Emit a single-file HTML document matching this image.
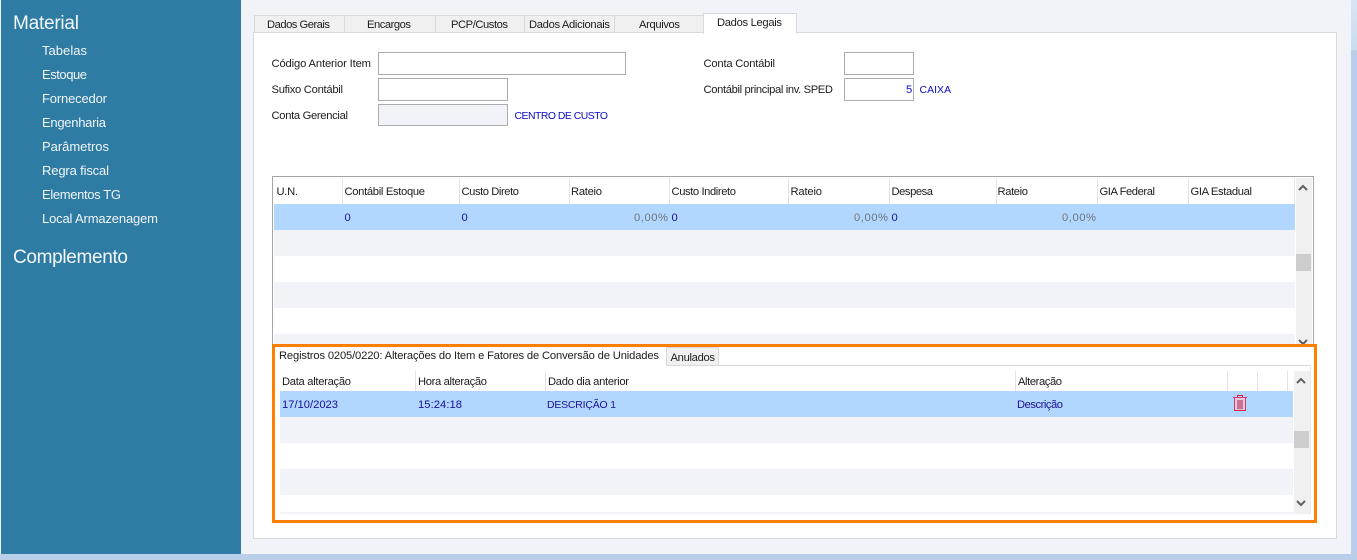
<!DOCTYPE html>
<html lang="pt"><head><meta charset="utf-8"><title>Material</title>
<style>
html,body{margin:0;padding:0;width:1357px;height:560px;overflow:hidden;background:#f2f3f8}
svg{display:block}
text{font-family:"Liberation Sans",sans-serif;font-size:11.2px;fill:#1c1c1c}
.s{font-size:13px;fill:#f1f6f9}
.h{font-size:19px;fill:#f4f8fb}
.b{fill:#0a0ac8}
.d{fill:#1c0f96}
.g{fill:#6f7580}
.u{font-size:10.4px}
</style></head><body>
<svg width="1357" height="560" viewBox="0 0 1357 560" xmlns="http://www.w3.org/2000/svg" lengthAdjust="spacing" shape-rendering="crispEdges">
<defs><linearGradient id="t" x1="0" y1="0" x2="0" y2="1"><stop offset="0" stop-color="#d6e5f5"/><stop offset="1" stop-color="#c9dcf0"/></linearGradient></defs>
<rect width="1357" height="560" fill="#f2f3f8"/>
<rect x="1" y="0" width="240" height="554" fill="#2e7ba3"/>
<rect x="0" y="554" width="1357" height="6" fill="#b9cfe9"/>
<rect x="1351" y="0" width="6" height="560" fill="#b9cfe9"/>
<rect x="1351" y="0" width="6" height="50" fill="url(#t)"/>

<!-- sidebar -->
<text class="h" x="13" y="29" textLength="66">Material</text>
<text class="s" x="42" y="55" textLength="45">Tabelas</text>
<text class="s" x="42" y="79" textLength="45">Estoque</text>
<text class="s" x="42" y="103" textLength="65">Fornecedor</text>
<text class="s" x="42" y="127" textLength="64">Engenharia</text>
<text class="s" x="42" y="151" textLength="67">Parâmetros</text>
<text class="s" x="42" y="175" textLength="67">Regra fiscal</text>
<text class="s" x="42" y="199" textLength="79">Elementos TG</text>
<text class="s" x="42" y="223" textLength="116">Local Armazenagem</text>
<text class="h" x="13" y="263" textLength="115">Complemento</text>

<!-- tabs -->
<g fill="#f0f0f0" stroke="#d9d9d9">
<rect x="254.500" y="15.500" width="90" height="17"/>
<rect x="344.500" y="15.500" width="91" height="17"/>
<rect x="435.500" y="15.500" width="89" height="17"/>
<rect x="524.500" y="15.500" width="90" height="17"/>
<rect x="614.500" y="15.500" width="89" height="17"/>
</g>
<!-- main panel -->
<rect x="253.500" y="32.500" width="1083" height="506" fill="#fff" stroke="#d9d9d9"/>
<rect x="703.500" y="13.500" width="93" height="20" fill="#fff" stroke="#d9d9d9"/>
<rect x="704" y="32" width="92" height="2" fill="#fff"/>
<text x="267" y="28" textLength="63">Dados Gerais</text>
<text x="367" y="28" textLength="44">Encargos</text>
<text x="451" y="28" textLength="57">PCP/Custos</text>
<text x="529" y="28" textLength="81">Dados Adicionais</text>
<text x="639" y="28" textLength="41">Arquivos</text>
<text x="717" y="26" textLength="65">Dados Legais</text>

<!-- form -->
<g fill="#fff" stroke="#ababab">
<rect x="378.500" y="52.500" width="247" height="22"/>
<rect x="378.500" y="78.500" width="129" height="22"/>
<rect x="378.500" y="104.500" width="129" height="21" fill="#f2f3f8"/>
<rect x="844.500" y="52.500" width="69" height="22"/>
<rect x="844.500" y="78.500" width="69" height="22"/>
</g>
<text x="271.500" y="67" textLength="99.500">Código Anterior Item</text>
<text x="271.500" y="93" textLength="71.500">Sufixo Contábil</text>
<text x="271.500" y="119" textLength="76.500">Conta Gerencial</text>
<text class="b u" x="514.500" y="119" textLength="93.500">CENTRO DE CUSTO</text>
<text x="703.500" y="67" textLength="71.500">Conta Contábil</text>
<text x="703.500" y="93" textLength="129.500">Contábil principal inv. SPED</text>
<text class="b" x="906" y="93">5</text>
<text class="b u" x="919.500" y="93" textLength="31.500">CAIXA</text>

<!-- upper grid -->
<rect x="272.500" y="176.500" width="1041" height="172" fill="#fff" stroke="#a6a6a6"/>
<rect x="274" y="204" width="1021" height="26" fill="#b1d7fe"/>
<rect x="274" y="230" width="1021" height="26" fill="#f2f3f8"/>
<rect x="274" y="282" width="1021" height="26" fill="#f2f3f8"/>
<rect x="274" y="334" width="1021" height="12" fill="#f2f3f8"/>
<rect x="1296" y="178" width="16" height="168" fill="#f0f0f0"/>
<rect x="1296" y="254" width="15" height="17" fill="#cdcdcd"/>
<g fill="#e3e3e3">
<rect x="342" y="178" width="1" height="26"/><rect x="459" y="178" width="1" height="26"/>
<rect x="569" y="178" width="1" height="26"/><rect x="669" y="178" width="1" height="26"/>
<rect x="788" y="178" width="1" height="26"/><rect x="889" y="178" width="1" height="26"/>
<rect x="996" y="178" width="1" height="26"/><rect x="1097" y="178" width="1" height="26"/>
<rect x="1188" y="178" width="1" height="26"/><rect x="1294" y="178" width="1" height="26"/>
</g>
<text x="276.500" y="195" textLength="21.500">U.N.</text>
<text x="344.500" y="195" textLength="80.500">Contábil Estoque</text>
<text x="461.500" y="195" textLength="57.500">Custo Direto</text>
<text x="571" y="195" textLength="31">Rateio</text>
<text x="671.500" y="195" textLength="64.500">Custo Indireto</text>
<text x="790.500" y="195" textLength="31.500">Rateio</text>
<text x="891.500" y="195" textLength="41.500">Despesa</text>
<text x="997.500" y="195" textLength="30.500">Rateio</text>
<text x="1099.500" y="195" textLength="55.500">GIA Federal</text>
<text x="1190.500" y="195" textLength="61.500">GIA Estadual</text>
<text class="d" x="344.500" y="221">0</text>
<text class="d" x="461.500" y="221">0</text>
<text class="g" x="634" y="221" textLength="34">0,00%</text>
<text class="d" x="671.500" y="221">0</text>
<text class="g" x="854" y="221" textLength="34">0,00%</text>
<text class="d" x="891.500" y="221">0</text>
<text class="g" x="1062" y="221" textLength="34">0,00%</text>
<path d="M1299 190l4-4 4 4M1299 340l4 4 4-4" fill="none" stroke="#606060" stroke-width="2" shape-rendering="auto"/>

<!-- highlighted section -->
<rect x="275" y="347" width="1039" height="173" fill="#fff"/>
<rect x="666.500" y="347.500" width="52" height="18" fill="#f0f0f0" stroke="#d9d9d9"/>
<rect x="719" y="365" width="591" height="1" fill="#d9d9d9"/>
<rect x="1310" y="365" width="1" height="149" fill="#e8e8e8"/>
<text x="279" y="359" textLength="380">Registros 0205/0220: Alterações do Item e Fatores de Conversão de Unidades</text>
<text x="670.500" y="361" textLength="44.500">Anulados</text>
<rect x="280" y="391" width="1013" height="26" fill="#b1d7fe"/>
<rect x="280" y="417" width="1013" height="26" fill="#f2f3f8"/>
<rect x="280" y="469" width="1013" height="26" fill="#f2f3f8"/>
<rect x="280" y="512" width="1030" height="2" fill="#f2f3f8"/>
<rect x="1294" y="371" width="16" height="143" fill="#f0f0f0"/>
<rect x="1294" y="431" width="15" height="17" fill="#cdcdcd"/>
<g fill="#e3e3e3">
<rect x="415" y="371" width="1" height="20"/><rect x="545" y="371" width="1" height="20"/>
<rect x="1015" y="371" width="1" height="20"/><rect x="1227" y="371" width="1" height="20"/>
<rect x="1257" y="371" width="1" height="20"/><rect x="1287" y="371" width="1" height="20"/>
</g>
<text x="282" y="385" textLength="69">Data alteração</text>
<text x="418" y="385" textLength="69">Hora alteração</text>
<text x="548" y="385" textLength="81">Dado dia anterior</text>
<text x="1018" y="385" textLength="44">Alteração</text>
<text class="d" x="282" y="408" textLength="56">17/10/2023</text>
<text class="d" x="418" y="408" textLength="44">15:24:18</text>
<text class="d u" x="547" y="408" textLength="69">DESCRIÇÃO 1</text>
<text class="d" x="1017" y="408" textLength="46">Descrição</text>
<!-- trash -->
<rect x="1233" y="397" width="14" height="1" fill="#e0184c"/>
<rect x="1237.500" y="395.500" width="5" height="2" fill="none" stroke="#d81e5a"/>
<rect x="1234.500" y="397.500" width="11" height="13" fill="#e4c8d8" stroke="#d83c70"/>
<rect x="1234" y="410" width="12" height="1" fill="#e0184c"/>
<rect x="1237" y="400" width="6" height="9" fill="#cf6f96"/>
<path d="M1297 383l4-4 4 4M1297 501l4 4 4-4" fill="none" stroke="#606060" stroke-width="2" shape-rendering="auto"/>
<rect x="273.500" y="345.500" width="1042" height="176" fill="none" stroke="#ff8000" stroke-width="3"/>
</svg>
</body></html>
